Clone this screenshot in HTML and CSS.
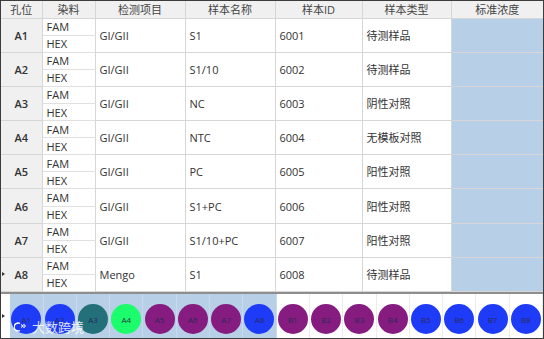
FILE: index.html
```html
<!DOCTYPE html>
<html lang="zh-CN">
<head>
  <meta charset="UTF-8" />
  <title>样本设置</title>
  <link rel="stylesheet" href="styles.css">
</head>
<body>
  <div class="panel">
    <table class="samples">
      <colgroup>
        <col class="c-well"><col class="c-dye"><col class="c-item"><col class="c-name">
        <col class="c-id"><col class="c-type"><col class="c-conc">
      </colgroup>
      <thead>
        <tr><th>孔位</th><th>染料</th><th>检测项目</th><th>样本名称</th><th>样本ID</th><th>样本类型</th><th>标准浓度</th></tr>
      </thead>
      <tbody id="rows"></tbody>
    </table>

    <div class="plate">
      <div class="gutter"><span class="marker"></span></div>
      <div class="wells" id="wells"></div>
      <div class="watermark">
        <svg width="14" height="12" viewBox="0 0 14 12"><path d="M6 2.5A4 4 0 1 0 6 9.5" fill="none" stroke="#fff" stroke-width="1.4"/><path d="M7 3.5c1.5 0 1.5 3 3 3s1.5-3 0-3-1.5 3-3 3" fill="none" stroke="#fff" stroke-width="1"/></svg>
        <span>大数跨境</span>
      </div>
    </div>
  </div>

  <script>
    const samples = [
      ['A1', 'GI/GII', 'S1', '6001', '待测样品'],
      ['A2', 'GI/GII', 'S1/10', '6002', '待测样品'],
      ['A3', 'GI/GII', 'NC', '6003', '阴性对照'],
      ['A4', 'GI/GII', 'NTC', '6004', '无模板对照'],
      ['A5', 'GI/GII', 'PC', '6005', '阳性对照'],
      ['A6', 'GI/GII', 'S1+PC', '6006', '阳性对照'],
      ['A7', 'GI/GII', 'S1/10+PC', '6007', '阳性对照'],
      ['A8', 'Mengo', 'S1', '6008', '待测样品']
    ];

    const body = document.getElementById('rows');
    samples.forEach((s, i) => {
      const last = i === samples.length - 1;
      const top = document.createElement('tr');
      top.innerHTML =
        `<td rowspan="2" class="well">${last ? '<span class="marker"></span>' : ''}${s[0]}</td>` +
        `<td class="dye">FAM</td>` +
        `<td rowspan="2">${s[1]}</td><td rowspan="2">${s[2]}</td>` +
        `<td rowspan="2">${s[3]}</td><td rowspan="2">${s[4]}</td>` +
        `<td rowspan="2" class="conc"></td>`;
      const bottom = document.createElement('tr');
      bottom.innerHTML = `<td class="dye">HEX</td>`;
      body.appendChild(top);
      body.appendChild(bottom);
    });

    const wells = [
      ['A1', 'blue'], ['A2', 'blue'], ['A3', 'teal'], ['A4', 'green'],
      ['A5', 'purple'], ['A6', 'purple'], ['A7', 'purple'], ['A8', 'blue'],
      ['B1', 'purple'], ['B2', 'purple'], ['B3', 'purple'], ['B4', 'purple'],
      ['B5', 'blue'], ['B6', 'blue'], ['B7', 'blue'], ['B8', 'blue']
    ];
    const strip = document.getElementById('wells');
    wells.forEach(([name, color]) => {
      const cell = document.createElement('div');
      cell.className = 'cell' + (name[0] === 'A' ? ' selected' : '');
      cell.innerHTML = `<span class="dot ${color}">${name}</span>`;
      strip.appendChild(cell);
    });
  </script>
</body>
</html>
```

FILE: styles.css
```css
/* --- Global --- */
* { box-sizing: border-box; margin: 0; padding: 0; }
body {
  font-family: 'Open Sans', 'Noto Sans CJK SC', sans-serif;
  font-size: 11px;
  color: #333;
  background: #fff;
}

.panel {
  width: 544px;
  height: 339px;
  border: 1px solid #3c3c3c;
  position: relative;
  overflow: hidden;
}

/* --- Sample table --- */
.samples {
  width: 542px;
  table-layout: fixed;
  border-collapse: collapse;
}
.c-well { width: 41px; }
.c-dye { width: 53px; }
.c-item { width: 90px; }
.c-name { width: 90px; }
.c-id { width: 87px; }
.c-type { width: 89px; }
.c-conc { width: 92px; }

.samples th {
  height: 17px;
  background: #f0f0f0;
  font-weight: normal;
  color: #444;
  border: 1px solid #d6d6d6;
  border-top: none;
  line-height: 15px;
}
.samples td {
  height: 17.1px;
  padding: 0 4px;
  border: 1px solid #d6d6d6;
  white-space: nowrap;
  line-height: 15px;
}
.samples tr > :first-child { border-left: none; }
.samples tr > :last-child { border-right: none; }

.samples td.well {
  background: #f0f0f0;
  text-align: center;
  font-weight: 600;
  position: relative;
}
.samples td.dye { border-color: #e0e0e0 #d6d6d6; }
.samples td.conc { background: #b8cfe8; }

.marker {
  position: absolute;
  left: 1px;
  top: 50%;
  margin-top: -2px;
  border-left: 3px solid #333;
  border-top: 2px solid transparent;
  border-bottom: 2px solid transparent;
}

/* --- Plate strip --- */
.plate {
  display: flex;
  height: 46px;
  border-top: 2px solid #8e8e8e;
  position: relative;
}
.gutter {
  width: 10px;
  position: relative;
}
.wells {
  display: flex;
  flex: 1;
}
.cell {
  flex: 0 0 33.3px;
  border-right: 1px solid #ececec;
  display: flex;
  justify-content: center;
  padding-top: 10px;
}
.cell.selected {
  background: #b8cfe8;
  border-right-color: #c9daee;
}
.dot {
  width: 30px;
  height: 30px;
  border-radius: 50%;
  display: flex;
  align-items: center;
  justify-content: center;
  font-size: 8px;
  color: #2a2a55;
}
.dot.blue { background: #1e3cf8; }
.dot.teal { background: #236f7a; }
.dot.green { background: #1cfd6c; color: #234; }
.dot.purple { background: #861c80; }

.watermark {
  position: absolute;
  left: 13px;
  top: 23px;
  display: flex;
  align-items: center;
  gap: 4px;
  color: rgba(255,255,255,0.85);
  font-size: 13px;
  font-family: 'Noto Sans CJK SC', sans-serif;
}
```
